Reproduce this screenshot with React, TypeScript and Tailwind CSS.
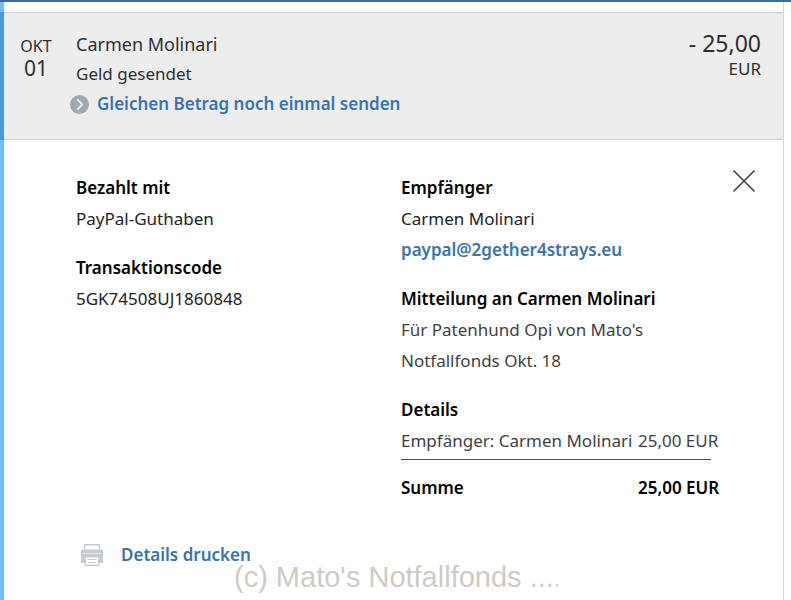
import { ReactNode } from "react";

interface FieldProps {
  title: string;
  children: ReactNode;
}

function Field({ title, children }: FieldProps) {
  return (
    <section>
      <h3 className="font-semibold text-black">{title}</h3>
      {children}
    </section>
  );
}

function ChevronBadge() {
  return (
    <svg width="19" height="19" viewBox="0 0 19 19" fill="none" aria-hidden="true">
      <circle cx="9.5" cy="9.5" r="9.5" fill="#a3a8aa" />
      <path d="M7.3 4.3 12.2 9.5 7.3 14.7" stroke="#f0f0f0" strokeWidth="1.8" />
    </svg>
  );
}

function CloseIcon() {
  return (
    <svg width="22" height="22" viewBox="0 0 22 22" fill="none" stroke="#333" strokeWidth="1.4" aria-hidden="true">
      <path d="M.5.5l21 21M21.5.5l-21 21" />
    </svg>
  );
}

function PrinterIcon() {
  return (
    <svg width="22" height="22" viewBox="0 0 22 22" fill="none" aria-hidden="true">
      <path d="M3.5 6V.8h15V6" stroke="#c5cbcf" strokeWidth="1.5" />
      <rect x="0" y="5.5" width="22" height="13.5" rx="1.5" fill="#c5cbcf" />
      <path d="M2.5 9.5h17" stroke="#e4e8ea" strokeWidth="1" />
      <rect x="4.2" y="12.7" width="13.6" height="8.6" fill="#fff" stroke="#c5cbcf" strokeWidth="1.4" />
      <path d="M6.5 15.5h9M6.5 18.5h9" stroke="#c5cbcf" strokeWidth="1.2" />
    </svg>
  );
}

export default function App() {
  return (
    <div className="relative min-h-screen overflow-hidden border-t-2 border-[#3f66a9] bg-white font-['Noto_Sans','Open_Sans',sans-serif] text-[17px] text-[#222]">
      <main className="mr-[7px] flex min-h-[598px] flex-col border-r border-[#d6d6da]">
        <div className="h-2.5 border-l-4 border-[#74bff2]" />

        {/* Transaction summary */}
        <header className="flex border-l-4 border-[#4d9bd6] bg-[#ededed]">
          <div className="flex grow border-y border-[#d3d3d6] pt-4 pr-[22px] pb-[19px] text-[#2f2f2f]">
            <time dateTime="10-01" className="flex w-16 flex-col items-center pt-1.5">
              <span className="text-base leading-[22px]">OKT</span>
              <span className="text-[21px] leading-[22px]">01</span>
            </time>
            <div className="grow pl-2">
              <p className="text-lg leading-[30px]">Carmen Molinari</p>
              <p className="leading-[29px]">Geld gesendet</p>
              <a href="#" className="-ml-1.5 flex items-center gap-2 leading-8 font-semibold text-[#3a73b0]">
                <ChevronBadge />
                Gleichen Betrag noch einmal senden
              </a>
            </div>
            <p className="text-right leading-6">
              <span className="block text-[23px] leading-7">- 25,00</span>
              EUR
            </p>
          </div>
        </header>

        {/* Transaction details */}
        <div className="flex grow flex-col border-l-4 border-[#74bff2] pl-[72px] leading-[31px]">
          <div className="flex items-start pt-8">
            <div className="flex w-[325px] shrink-0 flex-col gap-[18px]">
              <Field title="Bezahlt mit">
                <p>PayPal-Guthaben</p>
              </Field>
              <Field title="Transaktionscode">
                <p>5GK74508UJ1860848</p>
              </Field>
            </div>
            <div className="flex grow flex-col gap-[18px]">
              <Field title="Empfänger">
                <p>Carmen Molinari</p>
                <a href="mailto:paypal@2gether4strays.eu" className="block font-semibold text-[#3a73b0]">
                  paypal@2gether4strays.eu
                </a>
              </Field>
              <Field title="Mitteilung an Carmen Molinari">
                <p className="text-[#3f3f3f]">
                  Für Patenhund Opi von Mato's
                  <br />
                  Notfallfonds Okt. 18
                </p>
              </Field>
              <Field title="Details">
                <table className="w-[324px] whitespace-nowrap">
                  <tbody className="text-[#3f3f3f]">
                    <tr>
                      <td className="w-[237px] p-0">Empfänger: Carmen Molinari</td>
                      <td className="p-0">25,00 EUR</td>
                    </tr>
                  </tbody>
                  <tfoot className="font-semibold text-black">
                    <tr>
                      <td colSpan={2} className="p-0 pr-3.5 pb-3">
                        <hr className="mt-[3px] border-[#555]" />
                      </td>
                    </tr>
                    <tr>
                      <th scope="row" className="p-0 text-left font-semibold">Summe</th>
                      <td className="p-0">25,00 EUR</td>
                    </tr>
                  </tfoot>
                </table>
              </Field>
            </div>
            <button type="button" aria-label="Schließen" className="-mt-0.5 mr-7 h-[22px] shrink-0">
              <CloseIcon />
            </button>
          </div>
          <a href="#" className="mt-9 ml-[5px] flex items-center gap-[18px] self-start font-semibold text-[#3a73b0]">
            <PrinterIcon />
            Details drucken
          </a>
        </div>
      </main>

      {/* Watermark over the page */}
      <p className="absolute top-[557px] left-[234px] w-[324px] overflow-hidden font-['Liberation_Sans',Arial,sans-serif] text-[29px] leading-9 whitespace-nowrap text-[#cfcbc4]">
        (c) Mato's Notfallfonds ....
      </p>
    </div>
  );
}
